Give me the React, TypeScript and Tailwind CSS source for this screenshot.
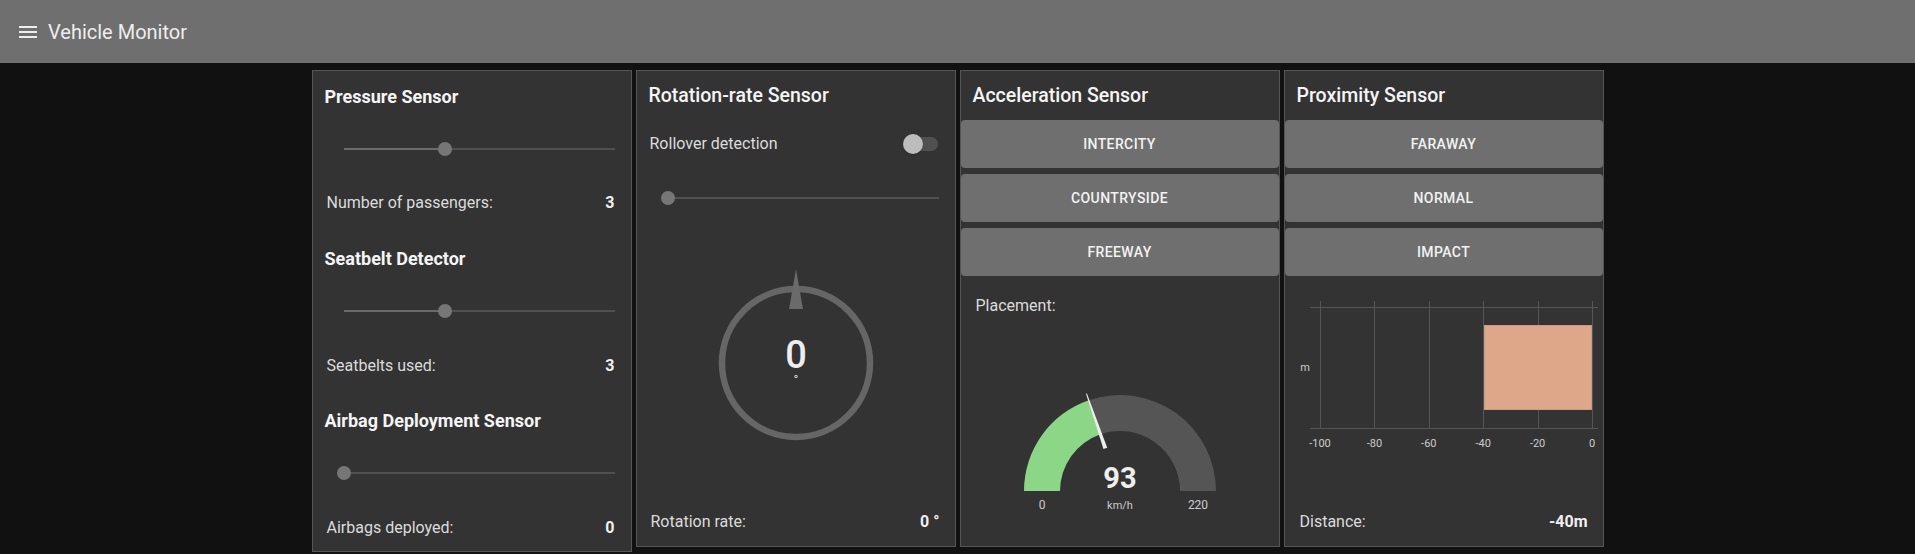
import React from 'react'

function SliderRow({ pct }: { pct: number }) {
  return (
    <div className="h-[40px] flex items-center pl-[31px] pr-[16px]">
      <div className="relative w-full h-[2px] bg-[#505050]">
        <div className="absolute left-0 top-0 h-full bg-[#6a6a6a]" style={{ width: `${pct}%` }} />
        <div
          className="absolute top-1/2 w-[14px] h-[14px] -translate-x-1/2 -translate-y-1/2 rounded-full bg-[#767676]"
          style={{ left: `${pct}%` }}
        />
      </div>
    </div>
  )
}

function ValueRow({ label, value, className = '' }: { label: string; value: string; className?: string }) {
  return (
    <div className={`h-[24px] flex items-center justify-between pl-[14px] pr-[16px] text-[16px] ${className}`}>
      <span className="text-[#dcdcdc]">{label}</span>
      <span className="text-[#f0f0f0] font-bold">{value}</span>
    </div>
  )
}

function Title({ children, bold = false }: { children: React.ReactNode; bold?: boolean }) {
  return (
    <div
      className={`h-[24px] flex items-center pl-[12px] text-[#f5f5f5] ${bold ? 'font-bold text-[18px]' : 'font-medium text-[19.5px]'}`}
    >
      {children}
    </div>
  )
}

function ModeButtons({ items }: { items: string[] }) {
  return (
    <div className="mt-[12px] flex flex-col gap-[6px]">
      {items.map((t) => (
        <button
          key={t}
          className="h-[48px] w-full rounded-[4px] bg-[#6f6f6f] text-[14px] font-medium tracking-[0.4px] text-[#f2f2f2] uppercase"
        >
          {t}
        </button>
      ))}
    </div>
  )
}

function polar(cx: number, cy: number, r: number, deg: number) {
  const a = (deg * Math.PI) / 180
  return [cx - r * Math.cos(a), cy - r * Math.sin(a)]
}

function Gauge() {
  const cx = 120
  const cy = 173
  const ro = 96
  const ri = 60
  const ang = 71
  const [ox, oy] = polar(cx, cy, ro, ang)
  const [ix, iy] = polar(cx, cy, ri, ang)
  const green = `M${cx - ro} ${cy} A${ro} ${ro} 0 0 1 ${ox} ${oy} L${ix} ${iy} A${ri} ${ri} 0 0 0 ${cx - ri} ${cy} Z`
  const grey = `M${ox} ${oy} A${ro} ${ro} 0 0 1 ${cx + ro} ${cy} L${cx + ri} ${cy} A${ri} ${ri} 0 0 0 ${ix} ${iy} Z`
  const a = (ang * Math.PI) / 180
  const px = Math.sin(a)
  const py = -Math.cos(a)
  const [nox, noy] = polar(cx, cy, 103, ang)
  const [nix, niy] = polar(cx, cy, 45, ang)
  const needle = [
    [nox + px * 0.5, noy + py * 0.5],
    [nox - px * 0.5, noy - py * 0.5],
    [nix - px * 2, niy - py * 2],
    [nix + px * 2, niy + py * 2],
  ]
    .map((p) => p.join(','))
    .join(' ')
  return (
    <svg width="240" height="210" viewBox="0 0 240 210">
      <path d={green} fill="#8cd687" />
      <path d={grey} fill="#555555" />
      <polygon points={needle} fill="#eeeeee" />
      <text x={cx} y={160} textAnchor="middle" dominantBaseline="central" fontSize="29" fontWeight="700" fill="#eeeeee">
        93
      </text>
      <text x={cx} y={187} textAnchor="middle" dominantBaseline="central" fontSize="11" fill="#cccccc">
        km/h
      </text>
      <text x={42} y={187} textAnchor="middle" dominantBaseline="central" fontSize="12" fill="#cccccc">
        0
      </text>
      <text x={198} y={187} textAnchor="middle" dominantBaseline="central" fontSize="12" fill="#cccccc">
        220
      </text>
    </svg>
  )
}

function Compass() {
  return (
    <svg width="200" height="292" viewBox="0 0 200 292">
      <circle cx="100" cy="145" r="74" fill="none" stroke="#666666" strokeWidth="6.5" />
      <polygon points="100,51 93,91 107,91" fill="#6a6a6a" />
      <text x="100" y="137" textAnchor="middle" dominantBaseline="central" fontSize="38" fontWeight="500" fill="#eeeeee">
        0
      </text>
      <text x="100" y="161" textAnchor="middle" dominantBaseline="central" fontSize="13" fill="#dddddd">
        °
      </text>
    </svg>
  )
}

function ProximityChart() {
  const xs = [35, 89.4, 143.8, 198.2, 252.6, 307]
  const labels = ['-100', '-80', '-60', '-40', '-20', '0']
  return (
    <svg width="318" height="170" viewBox="0 0 318 170" className="block">
      <line x1="25" y1="17.5" x2="313" y2="17.5" stroke="#555555" />
      <line x1="25" y1="138.5" x2="313" y2="138.5" stroke="#555555" />
      {xs.map((x) => (
        <line key={x} x1={Math.round(x) + 0.5} y1="11" x2={Math.round(x) + 0.5} y2="138" stroke="#555555" />
      ))}
      <rect x="199.5" y="35.5" width="107" height="84" fill="#dea78a" stroke="#c49e8b" />
      <text x="20" y="77" textAnchor="middle" dominantBaseline="central" fontSize="11" fill="#cccccc">
        m
      </text>
      {xs.map((x, i) => (
        <text key={i} x={x} y="153" textAnchor="middle" dominantBaseline="central" fontSize="11" fill="#cccccc">
          {labels[i]}
        </text>
      ))}
    </svg>
  )
}

export default function App() {
  return (
    <div className="min-h-[554px] bg-[#111111] font-['Roboto',sans-serif]">
      <header className="h-[63px] bg-[#6f6f6f] flex items-center pl-[16px] gap-[8px]">
        <svg width="24" height="24" viewBox="0 0 24 24" fill="#eeeeee">
          <path d="M3 18h18v-2H3v2zm0-5h18v-2H3v2zm0-7v2h18V6H3z" />
        </svg>
        <span className="text-[20px] text-[#eeeeee]">Vehicle Monitor</span>
      </header>

      <main className="flex justify-center items-start gap-[4px] pt-[7px]">
        {/* pressure / seatbelt / airbag */}
        <section className="w-[320px] border border-[#555555] bg-[#333333] pt-[13px] pb-[11px]">
          <Title bold>Pressure Sensor</Title>
          <div className="mt-[21px]">
            <SliderRow pct={37.5} />
          </div>
          <ValueRow className="mt-[22px]" label="Number of passengers:" value="3" />
          <div className="mt-[31px]">
            <Title bold>Seatbelt Detector</Title>
          </div>
          <div className="mt-[21px]">
            <SliderRow pct={37.5} />
          </div>
          <ValueRow className="mt-[23px]" label="Seatbelts used:" value="3" />
          <div className="mt-[30px]">
            <Title bold>Airbag Deployment Sensor</Title>
          </div>
          <div className="mt-[21px]">
            <SliderRow pct={0} />
          </div>
          <ValueRow className="mt-[23px]" label="Airbags deployed:" value="0" />
        </section>

        {/* rotation */}
        <section className="w-[320px] h-[477px] border border-[#555555] bg-[#333333] pt-[13px] pb-[12px] flex flex-col">
          <Title>Rotation-rate Sensor</Title>
          <div className="mt-[24px] h-[24px] flex items-center justify-between pl-[13px] pr-[17px]">
            <span className="text-[16px] text-[#dcdcdc]">Rollover detection</span>
            <div className="relative w-[34px] h-[14px] rounded-full bg-[#505050]">
              <div className="absolute left-[-1px] top-1/2 -translate-y-1/2 w-[20px] h-[20px] rounded-full bg-[#bdbdbd] shadow" />
            </div>
          </div>
          <div className="mt-[22px]">
            <SliderRow pct={0} />
          </div>
          <div className="flex justify-center shrink-0">
            <Compass />
          </div>
          <div className="mt-auto h-[24px] flex items-center justify-between pl-[14px] pr-[15px] text-[16px]">
            <span className="text-[#dcdcdc]">Rotation rate:</span>
            <span className="text-[#f0f0f0] font-bold">0 °</span>
          </div>
        </section>

        {/* acceleration */}
        <section className="w-[320px] h-[477px] border border-[#555555] bg-[#333333] pt-[13px] flex flex-col">
          <Title>Acceleration Sensor</Title>
          <ModeButtons items={['Intercity', 'Countryside', 'Freeway']} />
          <div className="mt-[18px] h-[24px] flex items-center pl-[15px] text-[16px] text-[#dcdcdc]">
            Placement:
          </div>
          <div className="flex justify-center">
            <Gauge />
          </div>
        </section>

        {/* proximity */}
        <section className="w-[320px] h-[477px] border border-[#555555] bg-[#333333] pt-[13px] pb-[12px] flex flex-col">
          <Title>Proximity Sensor</Title>
          <ModeButtons items={['Faraway', 'Normal', 'Impact']} />
          <div className="mt-[14px]">
            <ProximityChart />
          </div>
          <div className="mt-auto h-[24px] flex items-center justify-between pl-[15px] pr-[15px] text-[16px]">
            <span className="text-[#dcdcdc]">Distance:</span>
            <span className="text-[#f0f0f0] font-bold">-40m</span>
          </div>
        </section>
      </main>
    </div>
  )
}
